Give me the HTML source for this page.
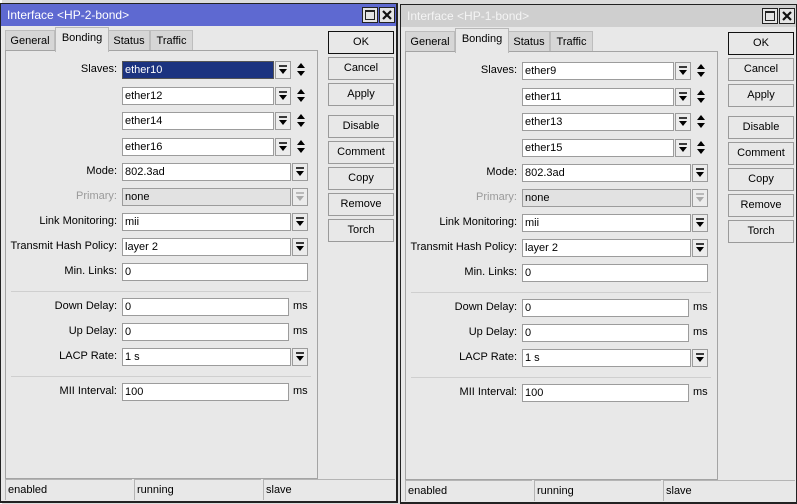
<!DOCTYPE html>
<html><head><meta charset="utf-8"><style>
*{box-sizing:border-box;margin:0;padding:0}
body{width:797px;height:504px;background:#dcdcdc;position:relative;overflow:hidden;font-family:"Liberation Sans","DejaVu Sans",sans-serif;font-size:11px;color:#000}
.win{position:absolute;width:398px;height:500px;background:#e8e8e8;border:1px solid #222;border-right:2px solid #222;border-bottom:2px solid #222}
.a{position:absolute}
.tb{left:0;top:0;width:395px;height:22px;background:#5e69d1;color:#fff;font-size:12px;line-height:22px;padding-left:6px}
.w2 .tb{background:#cfcfcf;color:#f4f4f4}
.wb{top:3px;width:16px;height:16px;border:1px solid #222;background:#e4e4e4}
.tab{top:26px;height:21px;background:#d6d6d6;border:1px solid #bdbdbd;border-bottom:none;line-height:20px;text-align:center;font-size:11px}
.tab.sel{top:23px;height:25px;background:#e8e8e8;border-color:#b8b8b8;z-index:2}
.panel{left:4px;top:46px;width:313px;height:429px;border:1px solid #a4a4a4;background:#e8e8e8}
.btn{left:327px;width:66px;height:23px;border:1px solid #9a9a9a;background:#e8e8e8;text-align:center;line-height:21px;font-size:11px}
.btn.ok{border:1px solid #111}
.lbl{width:116px;left:0;text-align:right;font-size:11px;line-height:17px}
.lbl.dis{color:#9a9a9a}
.in{height:18px;border:1px solid #9c9c9c;background:#fff;line-height:16px;padding-left:2px;font-size:11px}
.in.sel{background:#1c3380;color:#fff;border-color:#555}
.in.dis{background:#e2e2e2}
.dd{width:16px;height:18px;border:1px solid #9c9c9c;background:#ececec}
.ud{width:10px;height:16px}
.ms{font-size:11px;line-height:17px}
.sep{left:10px;width:300px;height:1px;background:#cfcfcf}
.st{top:475px;height:21px;border:1px solid #b4b4b4;border-bottom:none;border-right:none;background:#e8e8e8;line-height:20px;padding-left:2px;font-size:11px}
</style></head><body>
<div class="a" style="left:0;top:0;width:2px;height:504px;background:#fff"></div>

<!-- WINDOW 1 -->
<div class="win" style="left:0;top:3px">
 <div class="a tb">Interface &lt;HP-2-bond&gt;</div>
 <div class="a wb" style="left:361px"><div class="a" style="left:2px;top:2px;width:10px;height:10px;border:1px solid #222;border-top-width:2px"></div></div>
 <div class="a wb" style="left:378px"><svg class="a" style="left:2px;top:2px" width="10" height="10"><path d="M1 1L9 9M9 1L1 9" stroke="#111" stroke-width="2.2"/></svg></div>
 <div class="a tab" style="left:4px;width:50px">General</div>
 <div class="a tab sel" style="left:54px;width:54px">Bonding</div>
 <div class="a tab" style="left:107px;width:42px">Status</div>
 <div class="a tab" style="left:149px;width:43px">Traffic</div>
 <div class="a panel"></div>
 <div class="a btn ok" style="top:27px">OK</div>
 <div class="a btn" style="top:53px">Cancel</div>
 <div class="a btn" style="top:79px">Apply</div>
 <div class="a btn" style="top:111px">Disable</div>
 <div class="a btn" style="top:137px">Comment</div>
 <div class="a btn" style="top:163px">Copy</div>
 <div class="a btn" style="top:189px">Remove</div>
 <div class="a btn" style="top:215px">Torch</div>

 <div class="a lbl" style="top:57px">Slaves:</div>
 <div class="a in sel" style="left:121px;top:57px;width:152px">ether10</div>
 <div class="a dd" style="left:274px;top:57px"><svg width="14" height="16"><path d="M3 4H11" stroke="#000" stroke-width="1.5"/><path d="M3 7H11L7 12Z" fill="#000"/></svg></div>
 <div class="a ud" style="left:295px;top:58px"><svg width="10" height="16"><path d="M1 6H9L5 1Z M1 9H9L5 14Z" fill="#000"/></svg></div>
 <div class="a in" style="left:121px;top:83px;width:152px">ether12</div>
 <div class="a dd" style="left:274px;top:83px"><svg width="14" height="16"><path d="M3 4H11" stroke="#000" stroke-width="1.5"/><path d="M3 7H11L7 12Z" fill="#000"/></svg></div>
 <div class="a ud" style="left:295px;top:84px"><svg width="10" height="16"><path d="M1 6H9L5 1Z M1 9H9L5 14Z" fill="#000"/></svg></div>
 <div class="a in" style="left:121px;top:108px;width:152px">ether14</div>
 <div class="a dd" style="left:274px;top:108px"><svg width="14" height="16"><path d="M3 4H11" stroke="#000" stroke-width="1.5"/><path d="M3 7H11L7 12Z" fill="#000"/></svg></div>
 <div class="a ud" style="left:295px;top:109px"><svg width="10" height="16"><path d="M1 6H9L5 1Z M1 9H9L5 14Z" fill="#000"/></svg></div>
 <div class="a in" style="left:121px;top:134px;width:152px">ether16</div>
 <div class="a dd" style="left:274px;top:134px"><svg width="14" height="16"><path d="M3 4H11" stroke="#000" stroke-width="1.5"/><path d="M3 7H11L7 12Z" fill="#000"/></svg></div>
 <div class="a ud" style="left:295px;top:135px"><svg width="10" height="16"><path d="M1 6H9L5 1Z M1 9H9L5 14Z" fill="#000"/></svg></div>

 <div class="a lbl" style="top:159px">Mode:</div>
 <div class="a in" style="left:121px;top:159px;width:169px">802.3ad</div>
 <div class="a dd" style="left:291px;top:159px"><svg width="14" height="16"><path d="M3 4H11" stroke="#000" stroke-width="1.5"/><path d="M3 7H11L7 12Z" fill="#000"/></svg></div>
 <div class="a lbl dis" style="top:184px">Primary:</div>
 <div class="a in dis" style="left:121px;top:184px;width:169px">none</div>
 <div class="a dd" style="left:291px;top:184px"><svg width="14" height="16"><path d="M3 4H11" stroke="#aaa" stroke-width="1.5"/><path d="M3 7H11L7 12Z" fill="#aaa"/></svg></div>
 <div class="a lbl" style="top:209px">Link Monitoring:</div>
 <div class="a in" style="left:121px;top:209px;width:169px">mii</div>
 <div class="a dd" style="left:291px;top:209px"><svg width="14" height="16"><path d="M3 4H11" stroke="#000" stroke-width="1.5"/><path d="M3 7H11L7 12Z" fill="#000"/></svg></div>
 <div class="a lbl" style="top:234px">Transmit Hash Policy:</div>
 <div class="a in" style="left:121px;top:234px;width:169px">layer 2</div>
 <div class="a dd" style="left:291px;top:234px"><svg width="14" height="16"><path d="M3 4H11" stroke="#000" stroke-width="1.5"/><path d="M3 7H11L7 12Z" fill="#000"/></svg></div>
 <div class="a lbl" style="top:259px">Min. Links:</div>
 <div class="a in" style="left:121px;top:259px;width:186px">0</div>
 <div class="a sep" style="top:287px"></div>
 <div class="a lbl" style="top:294px">Down Delay:</div>
 <div class="a in" style="left:121px;top:294px;width:167px">0</div>
 <div class="a ms" style="left:292px;top:294px">ms</div>
 <div class="a lbl" style="top:319px">Up Delay:</div>
 <div class="a in" style="left:121px;top:319px;width:167px">0</div>
 <div class="a ms" style="left:292px;top:319px">ms</div>
 <div class="a lbl" style="top:344px">LACP Rate:</div>
 <div class="a in" style="left:121px;top:344px;width:169px">1 s</div>
 <div class="a dd" style="left:291px;top:344px"><svg width="14" height="16"><path d="M3 4H11" stroke="#000" stroke-width="1.5"/><path d="M3 7H11L7 12Z" fill="#000"/></svg></div>
 <div class="a sep" style="top:372px"></div>
 <div class="a lbl" style="top:379px">MII Interval:</div>
 <div class="a in" style="left:121px;top:379px;width:167px">100</div>
 <div class="a ms" style="left:292px;top:379px">ms</div>
 <div class="a st" style="left:4px;width:127px">enabled</div>
 <div class="a st" style="left:133px;width:127px">running</div>
 <div class="a st" style="left:262px;width:132px">slave</div>
</div>

<!-- WINDOW 2 -->
<div class="win w2" style="left:400px;top:4px">
 <div class="a tb">Interface &lt;HP-1-bond&gt;</div>
 <div class="a wb" style="left:361px"><div class="a" style="left:2px;top:2px;width:10px;height:10px;border:1px solid #222;border-top-width:2px"></div></div>
 <div class="a wb" style="left:378px"><svg class="a" style="left:2px;top:2px" width="10" height="10"><path d="M1 1L9 9M9 1L1 9" stroke="#111" stroke-width="2.2"/></svg></div>
 <div class="a tab" style="left:4px;width:50px">General</div>
 <div class="a tab sel" style="left:54px;width:54px">Bonding</div>
 <div class="a tab" style="left:107px;width:42px">Status</div>
 <div class="a tab" style="left:149px;width:43px">Traffic</div>
 <div class="a panel"></div>
 <div class="a btn ok" style="top:27px">OK</div>
 <div class="a btn" style="top:53px">Cancel</div>
 <div class="a btn" style="top:79px">Apply</div>
 <div class="a btn" style="top:111px">Disable</div>
 <div class="a btn" style="top:137px">Comment</div>
 <div class="a btn" style="top:163px">Copy</div>
 <div class="a btn" style="top:189px">Remove</div>
 <div class="a btn" style="top:215px">Torch</div>

 <div class="a lbl" style="top:57px">Slaves:</div>
 <div class="a in" style="left:121px;top:57px;width:152px">ether9</div>
 <div class="a dd" style="left:274px;top:57px"><svg width="14" height="16"><path d="M3 4H11" stroke="#000" stroke-width="1.5"/><path d="M3 7H11L7 12Z" fill="#000"/></svg></div>
 <div class="a ud" style="left:295px;top:58px"><svg width="10" height="16"><path d="M1 6H9L5 1Z M1 9H9L5 14Z" fill="#000"/></svg></div>
 <div class="a in" style="left:121px;top:83px;width:152px">ether11</div>
 <div class="a dd" style="left:274px;top:83px"><svg width="14" height="16"><path d="M3 4H11" stroke="#000" stroke-width="1.5"/><path d="M3 7H11L7 12Z" fill="#000"/></svg></div>
 <div class="a ud" style="left:295px;top:84px"><svg width="10" height="16"><path d="M1 6H9L5 1Z M1 9H9L5 14Z" fill="#000"/></svg></div>
 <div class="a in" style="left:121px;top:108px;width:152px">ether13</div>
 <div class="a dd" style="left:274px;top:108px"><svg width="14" height="16"><path d="M3 4H11" stroke="#000" stroke-width="1.5"/><path d="M3 7H11L7 12Z" fill="#000"/></svg></div>
 <div class="a ud" style="left:295px;top:109px"><svg width="10" height="16"><path d="M1 6H9L5 1Z M1 9H9L5 14Z" fill="#000"/></svg></div>
 <div class="a in" style="left:121px;top:134px;width:152px">ether15</div>
 <div class="a dd" style="left:274px;top:134px"><svg width="14" height="16"><path d="M3 4H11" stroke="#000" stroke-width="1.5"/><path d="M3 7H11L7 12Z" fill="#000"/></svg></div>
 <div class="a ud" style="left:295px;top:135px"><svg width="10" height="16"><path d="M1 6H9L5 1Z M1 9H9L5 14Z" fill="#000"/></svg></div>

 <div class="a lbl" style="top:159px">Mode:</div>
 <div class="a in" style="left:121px;top:159px;width:169px">802.3ad</div>
 <div class="a dd" style="left:291px;top:159px"><svg width="14" height="16"><path d="M3 4H11" stroke="#000" stroke-width="1.5"/><path d="M3 7H11L7 12Z" fill="#000"/></svg></div>
 <div class="a lbl dis" style="top:184px">Primary:</div>
 <div class="a in dis" style="left:121px;top:184px;width:169px">none</div>
 <div class="a dd" style="left:291px;top:184px"><svg width="14" height="16"><path d="M3 4H11" stroke="#aaa" stroke-width="1.5"/><path d="M3 7H11L7 12Z" fill="#aaa"/></svg></div>
 <div class="a lbl" style="top:209px">Link Monitoring:</div>
 <div class="a in" style="left:121px;top:209px;width:169px">mii</div>
 <div class="a dd" style="left:291px;top:209px"><svg width="14" height="16"><path d="M3 4H11" stroke="#000" stroke-width="1.5"/><path d="M3 7H11L7 12Z" fill="#000"/></svg></div>
 <div class="a lbl" style="top:234px">Transmit Hash Policy:</div>
 <div class="a in" style="left:121px;top:234px;width:169px">layer 2</div>
 <div class="a dd" style="left:291px;top:234px"><svg width="14" height="16"><path d="M3 4H11" stroke="#000" stroke-width="1.5"/><path d="M3 7H11L7 12Z" fill="#000"/></svg></div>
 <div class="a lbl" style="top:259px">Min. Links:</div>
 <div class="a in" style="left:121px;top:259px;width:186px">0</div>
 <div class="a sep" style="top:287px"></div>
 <div class="a lbl" style="top:294px">Down Delay:</div>
 <div class="a in" style="left:121px;top:294px;width:167px">0</div>
 <div class="a ms" style="left:292px;top:294px">ms</div>
 <div class="a lbl" style="top:319px">Up Delay:</div>
 <div class="a in" style="left:121px;top:319px;width:167px">0</div>
 <div class="a ms" style="left:292px;top:319px">ms</div>
 <div class="a lbl" style="top:344px">LACP Rate:</div>
 <div class="a in" style="left:121px;top:344px;width:169px">1 s</div>
 <div class="a dd" style="left:291px;top:344px"><svg width="14" height="16"><path d="M3 4H11" stroke="#000" stroke-width="1.5"/><path d="M3 7H11L7 12Z" fill="#000"/></svg></div>
 <div class="a sep" style="top:372px"></div>
 <div class="a lbl" style="top:379px">MII Interval:</div>
 <div class="a in" style="left:121px;top:379px;width:167px">100</div>
 <div class="a ms" style="left:292px;top:379px">ms</div>
 <div class="a st" style="left:4px;width:127px">enabled</div>
 <div class="a st" style="left:133px;width:127px">running</div>
 <div class="a st" style="left:262px;width:132px">slave</div>
</div>
</body></html>
